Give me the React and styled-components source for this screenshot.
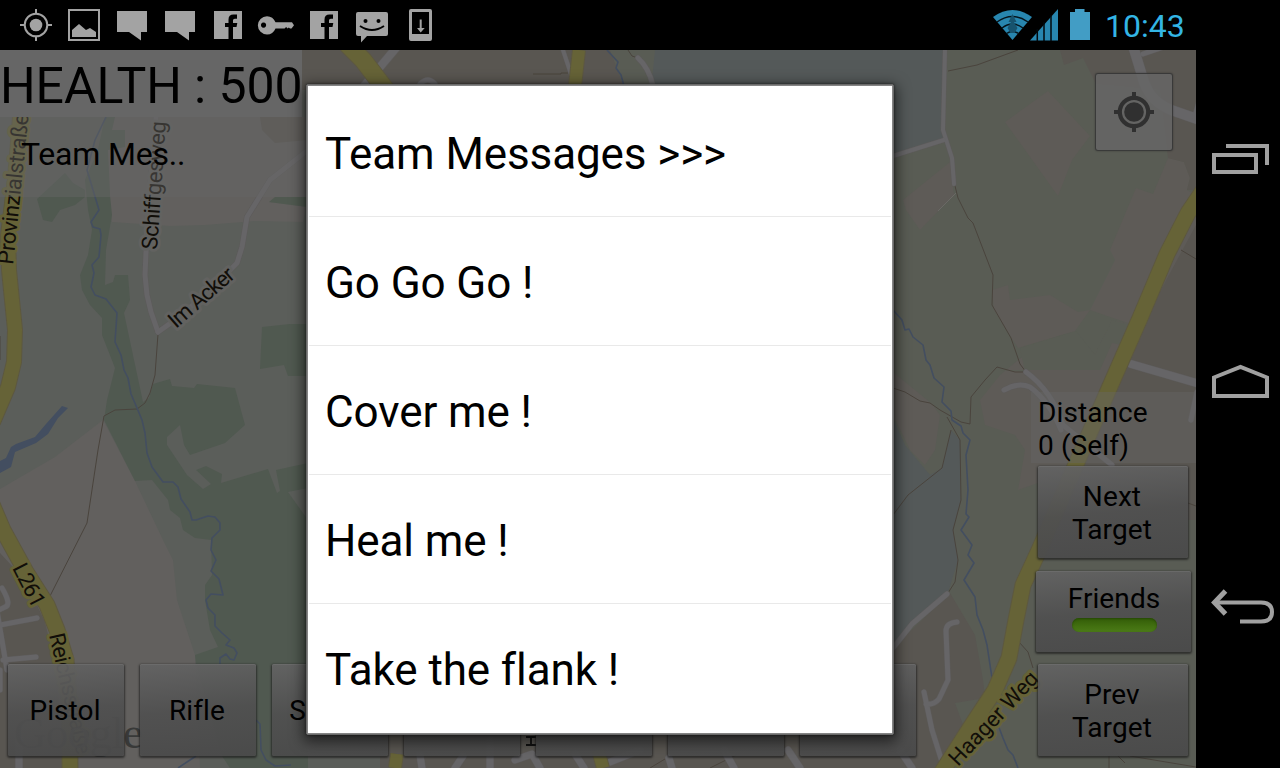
import React from "react";
import styled, { createGlobalStyle } from "styled-components";

const Global = createGlobalStyle`
  body { margin: 0; background: #000; font-family: Roboto, "Noto Sans", sans-serif; overflow: hidden; }
  * { box-sizing: border-box; }
`;

const Device = styled.div`
  display: flex;
  width: 1280px;
  height: 768px;
  background: #000;
  overflow: hidden;
`;

const Main = styled.main`
  display: flex;
  flex-direction: column;
  width: 1196px;
`;

const StatusBar = styled.header`
  display: flex;
  justify-content: space-between;
  height: 50px;
  padding: 0 11px 0 12px;
`;

const Notifications = styled.div`
  display: flex;
  align-items: center;
`;

const Indicators = styled.div`
  display: flex;
  align-items: center;
  gap: 15px;
`;

const StatusIcon = styled.svg`
  display: block;
  width: 48px;
  height: 50px;
  fill: #a3a3a3;
`;

const Signals = styled.svg`
  display: block;
  width: 100px;
  height: 50px;
`;

const Clock = styled.time`
  width: 80px;
  font-size: 32px;
  line-height: 50px;
  color: #33b5e5;
  white-space: nowrap;
  padding-top: 1px;
`;

const NavBar = styled.nav`
  display: flex;
  flex-direction: column;
  justify-content: space-between;
  width: 84px;
  padding: 130px 0 130px 6px;
`;

const NavIcon = styled.svg`
  display: block;
  width: 78px;
  height: 60px;
  fill: none;
  stroke: #a0a0a0;
  stroke-width: 4;
`;

const Stage = styled.section`
  display: grid;
  width: 1196px;
  height: 718px;
  overflow: hidden;
  > * { grid-area: 1 / 1; }
`;

const MapCanvas = styled.svg`
  display: block;
  width: 1196px;
  height: 718px;
`;

const Hud = styled.div`
  display: flex;
  flex-direction: column;
  justify-content: space-between;
  z-index: 1;
`;

const HudTop = styled.div`
  display: flex;
  justify-content: space-between;
  align-items: flex-start;
`;

const HudBottom = styled.div`
  display: flex;
  justify-content: space-between;
  align-items: flex-end;
`;

const Health = styled.div`
  width: 302px;
  height: 67px;
  background: #666;
  font-size: 50px;
  line-height: 73px;
  white-space: nowrap;
  letter-spacing: -0.1px;
`;

const TeamLabel = styled.div`
  width: 320px;
  height: 80px;
  padding-left: 21px;
  background: rgba(102, 102, 102, 0.45);
  font-size: 32px;
  line-height: 75px;
  letter-spacing: -0.2px;
`;

const LocateButton = styled.button`
  width: 78px;
  height: 78px;
  margin: 23px 23px 0 0;
  padding: 0;
  border: 1px solid rgba(35, 35, 35, 0.65);
  border-radius: 3px;
  background: rgba(102, 102, 102, 0.82);
  box-shadow: 0 0 2px rgba(0, 0, 0, 0.35);
`;

const Weapons = styled.div`
  display: flex;
  gap: 16px;
  padding: 0 0 12px 8px;
`;

const GameButton = styled.button`
  width: ${(p) => p.$w || 116}px;
  height: ${(p) => p.$h || 92}px;
  padding: ${(p) => p.$pad || "0 2px 0 0"};
  border: 0;
  border-radius: 2px;
  background: linear-gradient(175deg, rgba(99, 99, 99, 0.94), rgba(80, 80, 80, 0.94) 50%, rgba(74, 74, 74, 0.96));
  box-shadow: 0 1px 2px 1px rgba(30, 30, 30, 0.7), inset 0 1px 0 rgba(115, 115, 115, 0.5);
  color: #000;
  font: 28px/33px Roboto, sans-serif;
  letter-spacing: 0.1px;
`;

const Targets = styled.div`
  display: flex;
  flex-direction: column;
  align-items: center;
  width: 165px;
  padding: 0 0 12px;
`;

const TargetButtons = styled.div`
  display: flex;
  flex-direction: column;
  align-items: center;
  justify-content: space-between;
  height: 290px;
  margin-top: 3px;
  padding-right: 1px;
`;

const Distance = styled.div`
  width: 165px;
  height: 71px;
  padding: 4px 0 0 7px;
  background: rgba(102, 102, 102, 0.4);
  font-size: 28px;
  line-height: 33px;
  letter-spacing: 0.1px;
`;

const ToggleLight = styled.span`
  display: block;
  width: 85px;
  height: 14px;
  margin: 3px auto 0;
  border-radius: 7px;
  background: linear-gradient(#335c08, #427010 60%, #4b7a18);
  box-shadow: inset 0 1px 2px #264a06;
`;

const Dialog = styled.div`
  z-index: 2;
  align-self: start;
  width: 588px;
  height: 651px;
  margin: 34px 0 0 306px;
  padding: 1px;
  border: 1px solid #6a6a6a;
  border-radius: 2px;
  background: #858585;
  box-shadow: 0 4px 14px 3px rgba(0, 0, 0, 0.55), 0 0 3px rgba(0, 0, 0, 0.6);
`;

const Messages = styled.ul`
  height: 647px;
  margin: 0;
  padding: 2px 0 0;
  list-style: none;
  background: #fff;
`;

const Message = styled.li`
  height: 129px;
  margin: 0 1px;
  padding-left: 16px;
  border-bottom: ${(p) => (p.$last ? "0" : "1px solid #e9e9e9")};
  font-size: 44px;
  line-height: 133px;
  letter-spacing: -0.1px;
  color: #000;
  white-space: nowrap;
`;

const line = (d, w, stroke) => <path key={d} d={d} strokeWidth={w} stroke={stroke} />;
const ROAD = "#666567";
const MAJOR = "#666337";
const RIVER = "#434e60";
const TRAIL = "#4a443d";
const FOREST = "#505950";
const LAKE = "#545959";
const TOWN = "#595651";
const FIELD = "#5e5b57";

const rivers = [
  "M106 117L95 140 87 170 93 190 99 210 91 222 93 227 100 229 101 235 99 257 92 265 94 273 91 287 95 295 106 299 117 313 115 342 121 355 124 370 128 378 131 394 137 408 142 420 145 433 147 453 152 467 163 482 173 482 178 487 181 499 190 512 192 520 196 520 208 516 215 517 220 523 220 530 212 538 211 550 216 560 211 571 219 579 223 595 211 594 206 600 208 608 215 615 215 626 222 633 230 640 226 645 234 648 237 653 234 660 230 659 226 654 220 658 220 664",
  "M256 720L260 724 261 750 266 760 275 766 291 765", "M196 756L178 768",
  "M607 50L618 62 616 68 621 75 624 86",
  "M893 310L902 320 905 330 909 329 913 337 923 345 926 360 930 365 934 378 944 387 942 402 951 411 952 420 961 426 963 433 970 440 966 455 968 490 966 514 969 517 961 530 972 545 968 555 974 563 964 580 975 597 977 615 983 630 987 645 992 678",
  "M998 725L1003 738 1008 750 1013 755 1018 768",
];
const trails = [
  "M158 334L155 375 150 393 145 403 137 409 115 410 104 416 98 450 87 523 50 596",
  "M533 74H561V73H568", "M948 71L977 65 1018 50",
  "M628 50L632 56 635 57",
  "M955 186L958 198 968 218 973 223 993 275 992 305 1011 338 1020 364 1026 372 1015 372 997 367 985 380 971 397 970 424 961 422 940 410 930 403 920 401 905 392 893 388",
  "M947 417L960 440 961 500 953 530 958 560 955 582 948 593", "M951 430L942 468 908 495 893 515",
  "M1181 250L1196 259", "M1019 642L1028 652 1033 668", "M1188 503L1196 506", "M1109 756V768M1118 756L1125 763M1130 756L1196 767M650 768L670 756M710 768L740 753M0 336V360",
];
const roads = [
  ["M156 117L153 150 150 190 147 230 145 275 147 295 151 312 158 332", 5],
  ["M158 332L175 320 205 295 237 263 242 247 247 217 270 180 308 150", 5],
  ["M396 48L364 86", 8], ["M563 50L575 86", 4], ["M638 58Q649 68 653 86", 5],
  ["M420 84Q428 76 435 84", 5],
  ["M945 50L943 130 952 158 954 184", 4], ["M893 156L944 140", 4],
  ["M1133 46L1144 82Q1151 103 1174 111L1200 120", 10], ["M1143 54L1166 46", 5], ["M1195 118L1200 100", 6],
  ["M1131 364L1200 384", 8], ["M1004 390Q1018 382 1030 387 1050 402 1061 430", 5], ["M1026 372Q1052 391 1063 425L1112 465", 5], ["M1197 392L1191 420", 5],
  ["M893 648L912 624 947 594", 5], ["M957 622Q946 623 946 631L948 680 939 699Q934 705 926 704M924 692L932 730 944 768", 5],
  ["M0 625L37 618M3 660L36 657M2 588Q12 605 5 607L-3 611 7 670M0 690V670", 5],
  ["M19 740V768M420 755L422 768M490 740V768M463 756L455 768M515 760L532 754 540 768M575 754L584 768M669 758L672 768M724 750L734 768M788 750L800 768M900 750L912 768M610 762L640 750", 7],
];
const majors = [
  ["M20 117L15 180 8 235 9 270 12 300 15 330 14 362 8 387 -7 422", 14],
  ["M-9 502L3 530 26 572 47 605 57 630 66 660 69 700 70 768", 15],
  ["M347 44L363 60 386 90", 17], ["M579 50L575 86", 12], ["M397 754L395 768M598 750L603 768", 12],
  ["M1207 185L1188 213 1167 254 1140 318 1115 375 1080 455 1040 548 1023 585 1016 620 1009 658 995 690 970 728 940 775", 15],
];

const MapText = ({ x, y, r, size = 22, track = 0, yellow, children }) => (
  <text
    transform={`translate(${x} ${y}) rotate(${r})`}
    fontSize={size}
    letterSpacing={track}
    fill="#110e09"
    stroke={yellow ? MAJOR : "#626260"}
    strokeWidth="6"
    strokeLinejoin="round"
    paintOrder="stroke"
  >
    {children}
  </text>
);

const TownMap = () => (
  <MapCanvas viewBox="0 50 1196 718">
    <rect y="50" width="640" height="718" fill="#5b5e5a" />
    <rect x="610" y="50" width="586" height="718" fill="#595c54" />
    <path fill="#62605e" d="M0 489L55 457 103 420 135 481 163 540 173 560 177 600 195 655 200 768H0ZM105 117H308V200L269 202 306 207 303 222 255 221 205 225 170 226 112 222 108 180Z" />
    <path fill={TOWN} d="M0 553L25 580 45 622 57 670 62 768H0ZM302 50H610L625 90H302ZM260 117H308V140L275 143 262 130ZM380 730H935V768H380Z" />
    <path fill={FOREST} d="M105 117H115L112 130 125 130 125 147 108 150 110 195 112 215 106 250 105 285 113 282 115 275 128 275 130 300 124 313 143 402 149 398 153 384 170 379 172 386 194 388 197 384 235 388 245 425 225 443 190 455 184 445 180 425 167 437 167 445 187 475 203 489 211 484 196 470 206 466 222 474 221 483 268 469 277 493 280 491 276 470 308 463V768H230L222 756 196 664 195 655 218 647 210 630 205 600 205 585 212 575 211 540 195 538 183 530 180 518 170 510 168 500 152 480 135 481 104 420 107 400 115 368 102 335 102 318 90 305 82 290 80 275 88 255 92 230 88 210 85 180 98 150Z" />
    <path fill={FOREST} d="M37 199L65 173 73 183 85 190V197L75 205 60 210 52 222 43 220ZM269 202L275 197H308V207ZM262 327L290 324H308V376H288L284 365 260 369Z" />
    <path fill="#5b5e5a" d="M288 492L308 488V520Z" />
    <path fill={LAKE} d="M655 50H945L943 140 893 155 650 100ZM893 418L905 445 930 475 942 468 951 430 960 440 961 500 953 530 958 560 948 593 910 625 893 650Z" />
    <path fill={FIELD} d="M903 200L950 162 954 195 920 230 906 210ZM1005 122L1048 91 1090 136 1072 160 1058 196ZM1168 158L1184 162 1190 178 1187 190 1196 195V420L1110 560H1040L1075 470 1018 490 1025 450 1015 435 985 425 980 400 1000 375 1033 348 1075 331 1095 355 1112 320 1131 324 1110 317 1090 310 1078 312 1050 295 1010 300 1008 285 992 290 994 310 1018 348 1075 331 1090 310 1115 260 1110 250 1136 188 1153 194ZM893 372L932 404 940 415 935 450 925 465 910 450 893 415Z" />
    <path fill="#595c54" d="M1020 348L1076 331 1095 355 1112 320 1131 325 1122 345 1112 343 1100 370H1000L1025 372Z" />
    <path fill={TOWN} d="M1060 50H1196V190H1187L1190 178 1184 162 1168 158 1160 90 1096 84 1083 58 1064 65ZM1196 225L1123 360 1078 465 1058 520H1196ZM893 648L950 593 975 635 983 680 985 698 955 703 965 730 940 768H893Z" />
    <path fill="#595c54" d="M1030 550H1196V768H965L995 705Z" />
    <g fill="none" strokeLinejoin="round">
      {trails.map((d) => line(d, 1, TRAIL))}
      {rivers.map((d) => line(d, 1.6, RIVER))}
      <path d="M938 211L956 193" stroke="#6a6965" />
      <g strokeLinecap="round">
        {roads.map(([d, w]) => line(d, w + 1, "#5d5b5a"))}
        {roads.map(([d, w]) => line(d, w, ROAD))}
      </g>
      {majors.map(([d, w]) => line(d, w + 2, "#5d5840"))}
      {majors.map(([d, w]) => line(d, w, MAJOR))}
    </g>
    <path fill={RIVER} d="M62 406L68 408 58 418 48 434 36 443 15 452 11 467 0 473V461L6 458 11 447 16 444 35 437 46 424Z" />
    <MapText x={13} y={265} r={-84} track={-0.4} yellow>Provinzialstraße</MapText>
    <MapText x={157} y={250} r={-86} track={-0.4}>Schiffgesweg</MapText>
    <MapText x={176} y={329} r={-41} track={-1}>Im Acker</MapText>
    <MapText x={12} y={568} r={63} track={-1} yellow>L261</MapText>
    <MapText x={49} y={635} r={77} track={-0.4} yellow>Reichsstraße</MapText>
    <MapText x={958} y={767} r={-47} yellow>Haager Weg</MapText>
    <path d="M526 737H536M526 745H536M531 737V745" stroke="#111" strokeWidth="1.8" />
    <text x="14" y="748" fontSize="45" textLength="129" fontFamily="Liberation Serif, serif" fill="#383938">Google</text>
  </MapCanvas>
);

const Crosshair = () => (
  <StatusIcon viewBox="0 0 48 50">
    <circle cx="24" cy="25" r="6.3" />
    <circle cx="24" cy="25" r="11.3" fill="none" stroke="#a3a3a3" strokeWidth="2" />
    <path d="M23 9h2v5h-2zM23 36h2v5h-2zM8 24h5v2H8zM35 24h5v2h-5z" />
  </StatusIcon>
);
const Picture = () => (
  <StatusIcon viewBox="0 0 48 50">
    <path d="M8 9h32v32H8zM10 11v28h28V11z" fillRule="evenodd" />
    <path d="M12 37v-7l7-6 7 6 4-2 6 4v5z" />
  </StatusIcon>
);
const Bubble = () => (
  <StatusIcon viewBox="0 0 48 50"><path d="M9 11h30v21h-6v8.500l-12-8.500H9z" /></StatusIcon>
);
const Facebook = () => (
  <StatusIcon viewBox="0 0 48 50">
    <path d="M10 11h28v28H10z" />
    <path d="M33 14.600h-3.500q-5 0-5 5V23H21v4h3.500v12h4.500V27h3.500l.8-4H29v-2.700q0-1.600 1.800-1.600H33z" fill="#000" />
  </StatusIcon>
);
const Key = () => (
  <StatusIcon viewBox="0 0 48 50">
    <path fillRule="evenodd" d="M15 16.200q6 0 8.500 6H40l2 3-2.500 3.300h-1.500l-1.200-1-1.200 1-1.500-1.500-1.500 1.500H23.500q-2.500 6-8.500 6a9 9 0 0 1 0-18.300zM11.500 22.500a2.600 2.600 0 1 0 .1 0z" />
  </StatusIcon>
);
const Smile = () => (
  <StatusIcon viewBox="0 0 48 50">
    <path d="M10 12h28q2 0 2 2v20q0 2-2 2H19l-6 6.500V36h-3q-2 0-2-2V14q0-2 2-2z" />
    <circle cx="17.500" cy="21" r="2" fill="#000" /><circle cx="30.500" cy="21" r="2" fill="#000" />
    <path d="M12 26q12 8 24 0" fill="none" stroke="#000" strokeWidth="2" />
  </StatusIcon>
);
const Download = () => (
  <StatusIcon viewBox="0 0 48 50">
    <path fillRule="evenodd" d="M15 9h19q2 0 2 2v28q0 2-2 2H15q-2 0-2-2V11q0-2 2-2zM16 12v22h17V12z" />
    <path d="M23.700 19.500h2V28h3l-4 4.500L21 28h2.700z" />
  </StatusIcon>
);

const SignalIcons = () => (
  <Signals viewBox="990 0 100 50">
    <path d="M1012.500 40L993 17q19.500-14 39 0z" fill="#2886af" />
    <g fill="none" stroke="#05141c" strokeWidth="1.5">
      <path d="M997 22q15.500-11 31 0M1002 28q10.500-8 21 0M1006.500 33.500q6-4 12 0" />
    </g>
    <path d="M1012.500 14l4 8h-2.500l3.500 6-3 5h-4l-3-5 3.500-6h-2.500z" fill="#17536e" />
    <path d="M1030 40.500L1058 9V40.500Z" fill="#2886af" />
    <path d="M1037.300 29V41M1044 22V41M1051 15V41" stroke="#00080c" strokeWidth="1.500" />
    <path d="M1070 12h5V9h9.500v3h5.500v28h-20z" fill="#429dc5" />
  </Signals>
);

const TargetGlyph = () => (
  <svg width="76" height="76" viewBox="0 0 76 76" display="block">
    <g fill="#303030">
      <circle cx="38" cy="38" r="9.800" />
      <circle cx="38" cy="38" r="14.200" fill="none" stroke="#303030" strokeWidth="4.200" />
      <path d="M36 18h4v6h-4zM36 52h4v6h-4zM18 36h6v4h-6zM52 36h6v4h-6z" />
    </g>
  </svg>
);

const weapons = ["Pistol", "Rifle", "Sniper", "", "", "", ""];
const messages = ["Team Messages >>>", "Go Go Go !", "Cover me !", "Heal me !", "Take the flank !"];

export default function App() {
  return (
    <Device>
      <Global />
      <Main>
        <StatusBar>
          <Notifications>
            <Crosshair /><Picture /><Bubble /><Bubble /><Facebook /><Key /><Facebook /><Smile /><Download />
          </Notifications>
          <Indicators>
            <SignalIcons />
            <Clock>10:43</Clock>
          </Indicators>
        </StatusBar>
        <Stage>
          <TownMap />
          <Hud>
            <HudTop>
              <div>
                <Health>HEALTH : 500</Health>
                <TeamLabel>Team Mes..</TeamLabel>
              </div>
              <LocateButton aria-label="My location"><TargetGlyph /></LocateButton>
            </HudTop>
            <HudBottom>
              <Weapons>
                {weapons.map((name, i) => <GameButton key={i}>{name}</GameButton>)}
              </Weapons>
              <Targets>
                <Distance>Distance<br />0 (Self)</Distance>
                <TargetButtons>
                  <GameButton $w={150} $pad="2px 2px 0 0">Next<br />Target</GameButton>
                  <GameButton $w={155} $h={81} $pad="0 0 8px 2px">Friends<ToggleLight /></GameButton>
                  <GameButton $w={150} $pad="2px 2px 0 0">Prev<br />Target</GameButton>
                </TargetButtons>
              </Targets>
            </HudBottom>
          </Hud>
          <Dialog role="dialog">
            <Messages>
              {messages.map((m, i) => <Message key={m} $last={i === messages.length - 1}>{m}</Message>)}
            </Messages>
          </Dialog>
        </Stage>
      </Main>
      <NavBar>
        <NavIcon viewBox="1202 130 78 60"><path d="M1214 155h42v17h-42zM1226 146h41v19" /></NavIcon>
        <NavIcon viewBox="1202 354 78 60"><path d="M1214 396V377.500l26.500-10.500 26.500 10.500V396z" /></NavIcon>
        <NavIcon viewBox="1202 578 78 60"><path d="M1225.500 591l-11 11.500 11 11.500" strokeWidth="5" /><path d="M1216 602.500h45q11 0 11 9.500t-11 9.500h-21" /></NavIcon>
      </NavBar>
    </Device>
  );
}
